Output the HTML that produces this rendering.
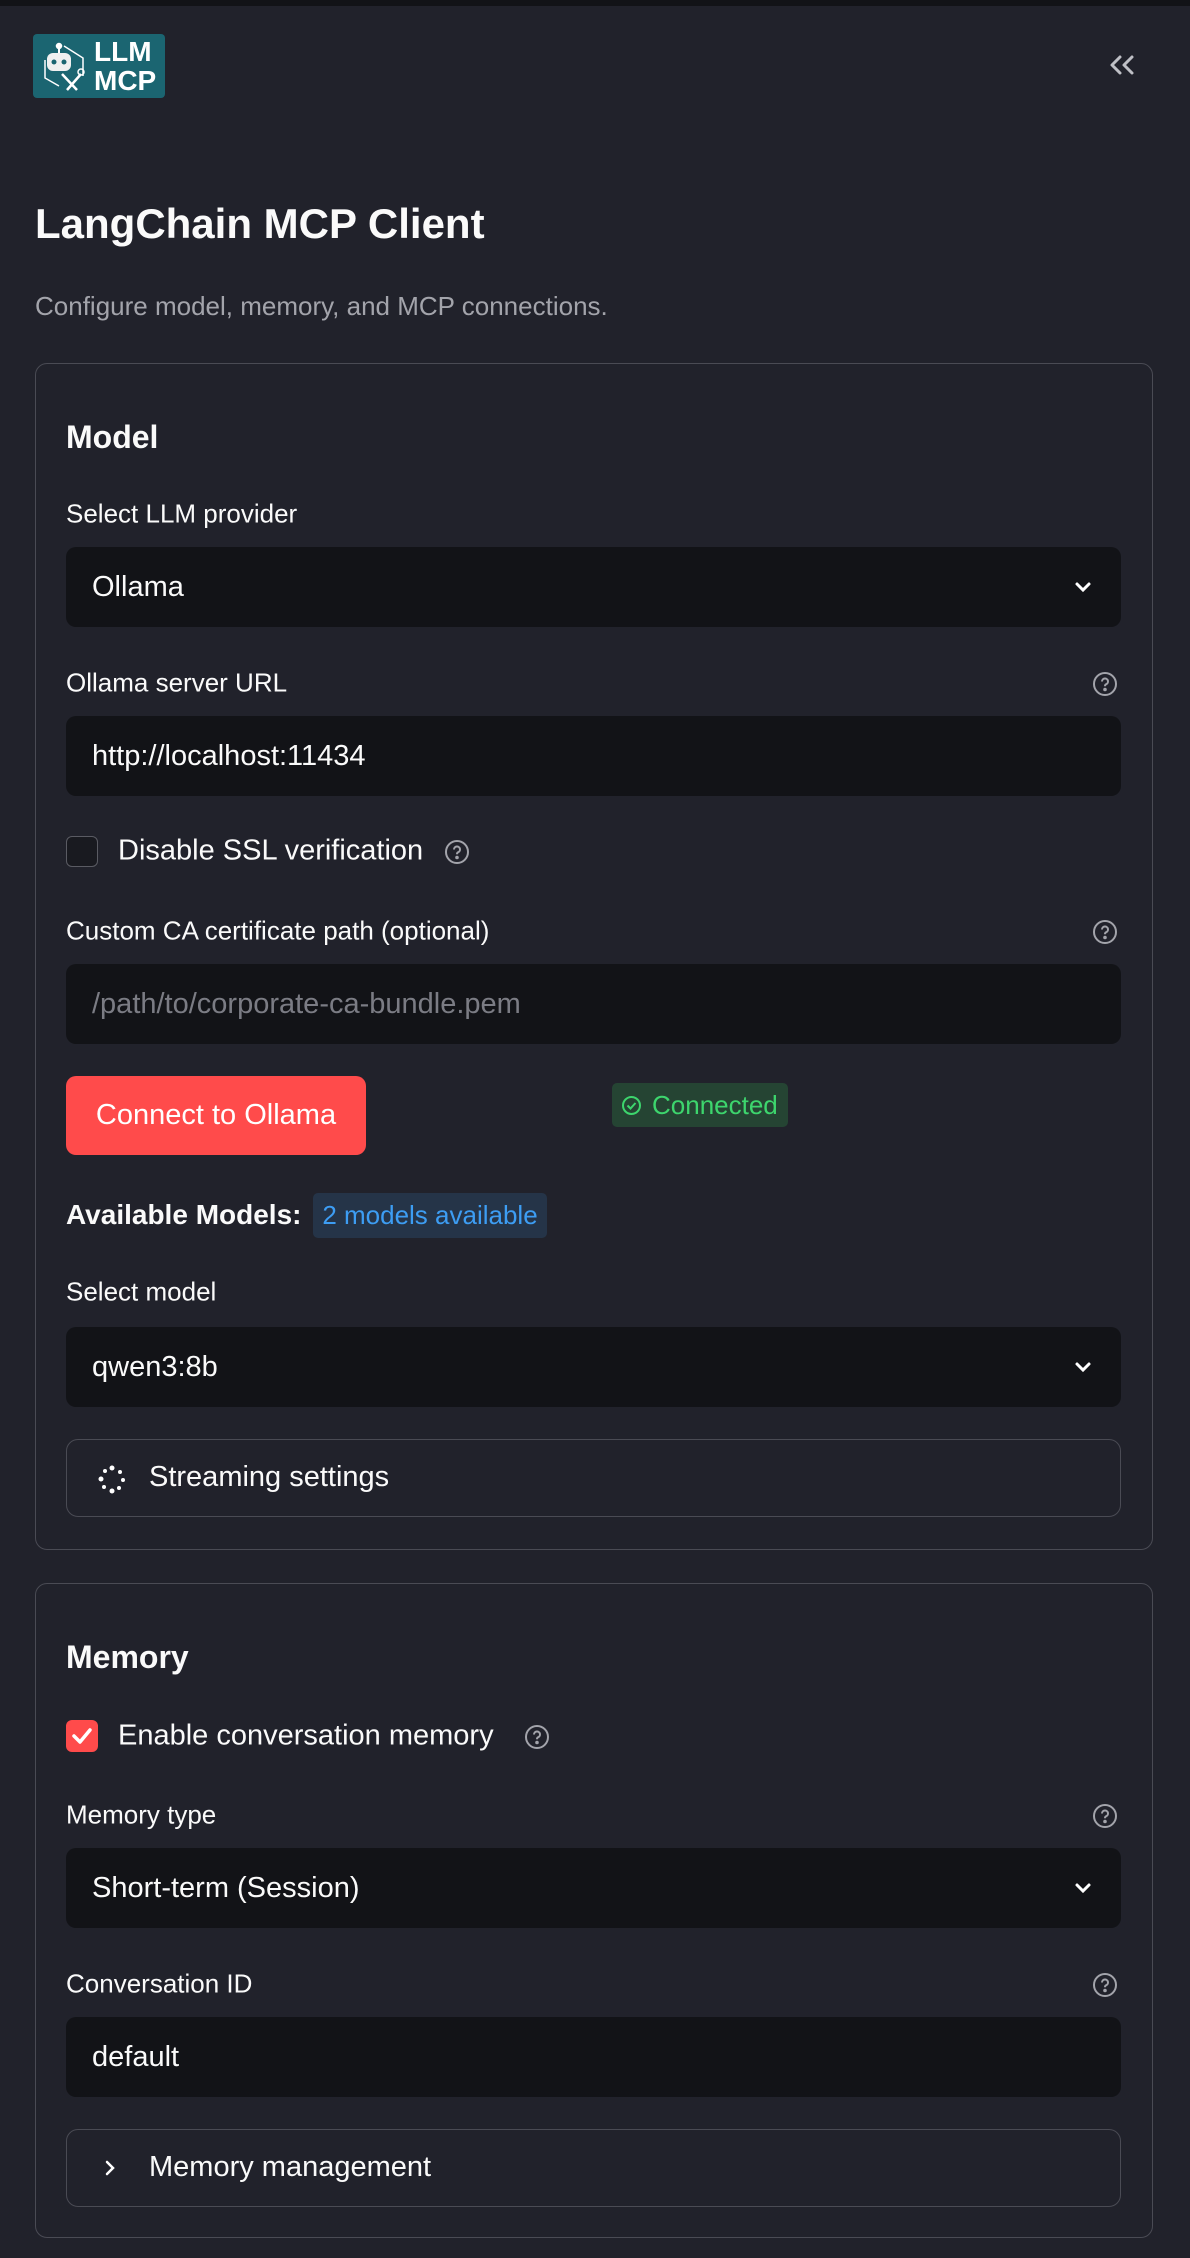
<!DOCTYPE html>
<html><head><meta charset="utf-8">
<style>
*{box-sizing:border-box;margin:0;padding:0}
html,body{width:1190px;height:2258px;background:#21222b;overflow:hidden;font-family:"Liberation Sans",sans-serif;color:#fafafa}
.top{position:absolute;left:0;top:0;width:1190px;height:6px;background:#121317}
.abs{position:absolute}
.card{position:absolute;left:35px;width:1118px;border:1.5px solid #4a4b54;border-radius:12px}
.h{position:absolute;left:66px;font-weight:bold;font-size:32px}
.lbl{position:absolute;left:66px;font-size:26px;color:#fafafa;transform:translateY(-50%);white-space:nowrap}
.box{position:absolute;left:66px;width:1055px;height:80px;background:#121317;border-radius:10px;font-size:29px;line-height:80px;padding-left:26px}
.chev{position:absolute;right:28px;top:30px}
.help{position:absolute;width:26px;height:26px;transform:translate(-50%,-50%)}
.exp{position:absolute;left:66px;width:1055px;height:78px;border:1.5px solid #4a4b54;border-radius:12px;font-size:29px;line-height:75px;padding-left:82px}
</style></head><body>
<div class="top"></div>
<div class="abs" style="left:33px;top:34px;width:132px;height:64px;background:#1b6571;border-radius:4px">
<svg class="abs" style="left:4px;top:4px" width="56" height="56" viewBox="0 0 56 56" fill="none" stroke="#fff" stroke-width="1.5">
<path d="M27 8 L46 20 L46 38 M8 22 L8 40 L22 48" />
<circle cx="22" cy="8" r="2.5" fill="#fff"/>
<path d="M22 10 V15" stroke-width="2"/>
<rect x="10" y="15" width="24" height="18" rx="6" fill="#f0f0f0" stroke="none"/>
<circle cx="17" cy="24" r="2.5" fill="#1b6571" stroke="none"/>
<circle cx="27" cy="24" r="2.5" fill="#1b6571" stroke="none"/>
<path d="M25 36 L40 52 M44 36 L30 52" stroke-width="2.5"/>
<circle cx="44" cy="34" r="3"/>
</svg>
<div class="abs" style="left:61px;top:3px;font-weight:bold;font-size:28px;line-height:29px;color:#fff">LLM<br>MCP</div>
</div>
<svg class="abs" style="left:1108px;top:54px" width="28" height="22" viewBox="0 0 28 22" fill="none" stroke="#bfc0c6" stroke-width="3" stroke-linecap="round" stroke-linejoin="round"><path d="M12 3 L4 11 L12 19 M24 3 L16 11 L24 19"/></svg>

<div class="abs" style="left:35px;top:200px;font-size:42px;font-weight:bold">LangChain MCP Client</div>
<div class="abs" style="left:35px;top:291px;font-size:26px;color:#a3a4ab">Configure model, memory, and MCP connections.</div>

<div class="card" style="top:363px;height:1187px"></div>
<div class="h" style="top:419px">Model</div>
<div class="lbl" style="top:514px">Select LLM provider</div>
<div class="box" style="top:547px">Ollama<svg class="chev" width="20" height="20" viewBox="0 0 20 20" fill="none" stroke="#fff" stroke-width="3" stroke-linecap="round"><path d="M4 7 L10 13 L16 7"/></svg></div>

<div class="lbl" style="top:683px">Ollama server URL</div>
<svg class="help" style="left:1105px;top:684px" viewBox="0 0 26 26" fill="none" stroke="#a3a4ab" stroke-width="2"><circle cx="13" cy="13" r="11"/><path d="M10 10.5a3 3 0 1 1 4 2.8c-.8.4-1 1-1 2" /><circle cx="13" cy="18.5" r=".8" fill="#a3a4ab"/></svg>
<div class="box" style="top:716px">http://localhost:11434</div>

<div class="abs" style="left:66px;top:836px;width:32px;height:31px;border:1.5px solid #5a5b63;border-radius:6px;background:#191a20"></div>
<div class="lbl" style="left:118px;top:851px;font-size:29px">Disable SSL verification</div>
<svg class="help" style="left:457px;top:852px" viewBox="0 0 26 26" fill="none" stroke="#a3a4ab" stroke-width="2"><circle cx="13" cy="13" r="11"/><path d="M10 10.5a3 3 0 1 1 4 2.8c-.8.4-1 1-1 2" /><circle cx="13" cy="18.5" r=".8" fill="#a3a4ab"/></svg>

<div class="lbl" style="top:931px">Custom CA certificate path (optional)</div>
<svg class="help" style="left:1105px;top:932px" viewBox="0 0 26 26" fill="none" stroke="#a3a4ab" stroke-width="2"><circle cx="13" cy="13" r="11"/><path d="M10 10.5a3 3 0 1 1 4 2.8c-.8.4-1 1-1 2" /><circle cx="13" cy="18.5" r=".8" fill="#a3a4ab"/></svg>
<div class="box" style="top:964px;color:#7b7c84">/path/to/corporate-ca-bundle.pem</div>

<div class="abs" style="left:66px;top:1076px;width:300px;height:79px;background:#ff4b4b;border-radius:10px;font-size:29px;line-height:79px;text-align:center;color:#fff">Connect to Ollama</div>
<div class="abs" style="left:612px;top:1083px;width:176px;height:44px;background:#254433;border-radius:5px;font-size:26px;line-height:44px;color:#3dd56d;padding-left:40px">Connected
<svg class="abs" style="left:9px;top:12px" width="21" height="21" viewBox="0 0 21 21" fill="none" stroke="#3dd56d" stroke-width="2"><circle cx="10.5" cy="10.5" r="8.5"/><path d="M6.5 10.5 L9.5 13.5 L14.5 8"/></svg></div>

<div class="lbl" style="top:1215px;font-weight:bold;font-size:28px">Available Models:</div>
<div class="abs" style="left:313px;top:1193px;width:234px;height:45px;background:#253448;border-radius:5px;font-size:26px;line-height:45px;color:#3d9df3;text-align:center;white-space:nowrap">2 models available</div>

<div class="lbl" style="top:1292px">Select model</div>
<div class="box" style="top:1327px">qwen3:8b<svg class="chev" width="20" height="20" viewBox="0 0 20 20" fill="none" stroke="#fff" stroke-width="3" stroke-linecap="round"><path d="M4 7 L10 13 L16 7"/></svg></div>

<div class="exp" style="top:1439px">Streaming settings
<svg class="abs" style="left:30px;top:24px" width="30" height="30" viewBox="0 0 30 30" fill="#fff"><circle cx="15" cy="4" r="2.5"/><circle cx="23" cy="8" r="2"/><circle cx="26" cy="16" r="2"/><circle cx="22" cy="24" r="2"/><circle cx="15" cy="27" r="2.5"/><circle cx="7" cy="23" r="2"/><circle cx="4" cy="15" r="2.5"/><circle cx="8" cy="7" r="2"/></svg></div>

<div class="card" style="top:1583px;height:655px"></div>
<div class="h" style="top:1639px">Memory</div>
<div class="abs" style="left:66px;top:1720px;width:32px;height:32px;background:#ff4b4b;border-radius:6px">
<svg width="32" height="32" viewBox="0 0 32 32" fill="none" stroke="#fff" stroke-width="3.5" stroke-linecap="round" stroke-linejoin="round"><path d="M8 16 L14 22 L24 10"/></svg></div>
<div class="lbl" style="left:118px;top:1736px;font-size:29px">Enable conversation memory</div>
<svg class="help" style="left:537px;top:1737px" viewBox="0 0 26 26" fill="none" stroke="#a3a4ab" stroke-width="2"><circle cx="13" cy="13" r="11"/><path d="M10 10.5a3 3 0 1 1 4 2.8c-.8.4-1 1-1 2" /><circle cx="13" cy="18.5" r=".8" fill="#a3a4ab"/></svg>

<div class="lbl" style="top:1815px">Memory type</div>
<svg class="help" style="left:1105px;top:1816px" viewBox="0 0 26 26" fill="none" stroke="#a3a4ab" stroke-width="2"><circle cx="13" cy="13" r="11"/><path d="M10 10.5a3 3 0 1 1 4 2.8c-.8.4-1 1-1 2" /><circle cx="13" cy="18.5" r=".8" fill="#a3a4ab"/></svg>
<div class="box" style="top:1848px">Short-term (Session)<svg class="chev" width="20" height="20" viewBox="0 0 20 20" fill="none" stroke="#fff" stroke-width="3" stroke-linecap="round"><path d="M4 7 L10 13 L16 7"/></svg></div>

<div class="lbl" style="top:1984px">Conversation ID</div>
<svg class="help" style="left:1105px;top:1985px" viewBox="0 0 26 26" fill="none" stroke="#a3a4ab" stroke-width="2"><circle cx="13" cy="13" r="11"/><path d="M10 10.5a3 3 0 1 1 4 2.8c-.8.4-1 1-1 2" /><circle cx="13" cy="18.5" r=".8" fill="#a3a4ab"/></svg>
<div class="box" style="top:2017px">default</div>

<div class="exp" style="top:2129px">Memory management
<svg class="abs" style="left:34px;top:29px" width="18" height="18" viewBox="0 0 18 18" fill="none" stroke="#fff" stroke-width="2.5" stroke-linecap="round"><path d="M6 3 L12 9 L6 15"/></svg></div>
</body></html>
